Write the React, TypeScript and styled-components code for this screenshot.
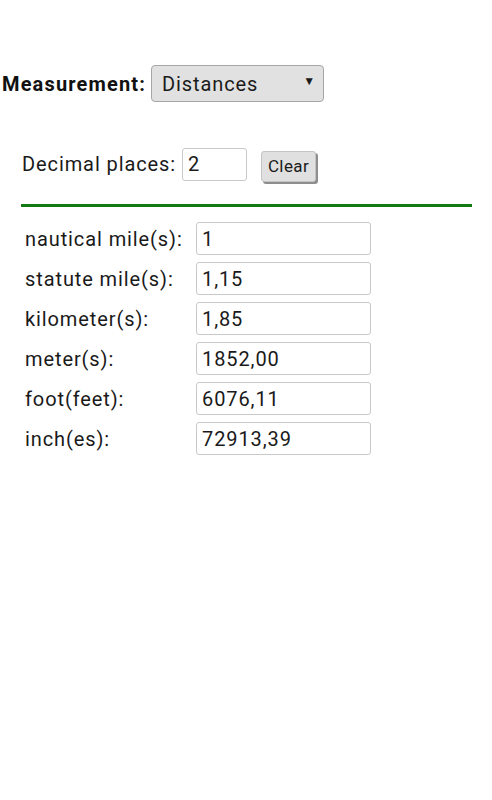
import styled, {createGlobalStyle} from 'styled-components';

const GlobalStyle = createGlobalStyle`
  html, body {
    margin: 0;
    padding: 0;
    background: #ffffff;
  }
  body {
    font-family: Roboto, "Noto Sans", sans-serif;
    color: #1a1a1a;
    letter-spacing: 0.9px;
  }
`;

const Page = styled.div`
  padding: 65px 0 0 2px;
  width: 492px;
  box-sizing: border-box;
`;

const MeasureRow = styled.div`
  display: flex;
  align-items: center;
  gap: 5px;
  height: 37px;
`;

const MeasureLabel = styled.label`
  font-size: 20px;
  font-weight: 700;
  letter-spacing: 1.15px;
  color: #111;
`;

const SelectBox = styled.div`
  position: relative;
  width: 173px;
  height: 37px;
  box-sizing: border-box;
  border: 1px solid #a6a6a6;
  border-radius: 4px;
  background: #e1e1e1;
  display: flex;
  align-items: center;
  padding-left: 10px;
  font-size: 20px;
  color: #1a1a1a;
`;

const Arrow = styled.span`
  position: absolute;
  right: 7px;
  top: 8px;
  font-size: 12px;
`;

const Section = styled.div`
  margin: 45px 0 0 19px;
  width: 451px;
`;

const DecimalRow = styled.div`
  display: flex;
  align-items: center;
  height: 34px;
  padding-left: 1px;
`;

const DecimalLabel = styled.label`
  font-size: 20px;
  margin-right: 6px;
`;

const TextField = styled.input<{w: number}>`
  width: ${(p) => p.w}px;
  height: 33px;
  box-sizing: border-box;
  border: 1px solid #c9c9c9;
  border-radius: 3px;
  padding: 0 0 0 5px;
  font-family: Roboto, "Noto Sans", sans-serif;
  font-size: 20px;
  letter-spacing: 0.9px;
  color: #1a1a1a;
  background: #fff;
  outline: none;
`;

const ClearButton = styled.button`
  margin-left: 14px;
  margin-top: 4px;
  width: 55px;
  height: 31px;
  box-sizing: border-box;
  border: 1px solid #c4c4c4;
  border-radius: 3px;
  background: #e0e0e0;
  box-shadow: 2px 2px 0 #8e8e8e;
  font-family: Roboto, "Noto Sans", sans-serif;
  font-size: 17px;
  letter-spacing: 0.4px;
  color: #1a1a1a;
  padding: 0;
`;

const Divider = styled.div`
  margin-top: 23px;
  height: 3px;
  background: #137a13;
`;

const Table = styled.div`
  margin-top: 15px;
  display: grid;
  grid-template-columns: 171px 175px;
  row-gap: 7px;
  padding-left: 4px;
  align-items: center;
`;

const UnitLabel = styled.label`
  font-size: 20px;
  color: #1a1a1a;
`;

const units = [
  {name: 'nautical mile(s):', value: '1'},
  {name: 'statute mile(s):', value: '1,15'},
  {name: 'kilometer(s):', value: '1,85'},
  {name: 'meter(s):', value: '1852,00'},
  {name: 'foot(feet):', value: '6076,11'},
  {name: 'inch(es):', value: '72913,39'},
];

export default function App() {
  return (
    <>
      <GlobalStyle />
      <Page>
        <MeasureRow>
          <MeasureLabel>Measurement:</MeasureLabel>
          <SelectBox>
            Distances
            <Arrow>▼</Arrow>
          </SelectBox>
        </MeasureRow>
        <Section>
          <DecimalRow>
            <DecimalLabel>Decimal places:</DecimalLabel>
            <TextField w={65} defaultValue="2" />
            <ClearButton>Clear</ClearButton>
          </DecimalRow>
          <Divider />
          <Table>
            {units.map((u) => [
              <UnitLabel key={`l_${u.name}`}>{u.name}</UnitLabel>,
              <TextField key={`v_${u.name}`} w={175} defaultValue={u.value} />,
            ])}
          </Table>
        </Section>
      </Page>
    </>
  );
}
